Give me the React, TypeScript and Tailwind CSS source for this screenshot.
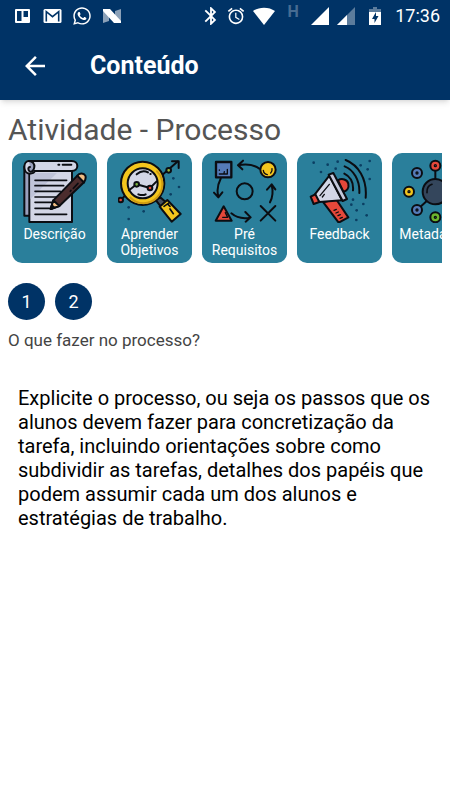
import type { ReactNode } from "react";
import { FaWhatsapp } from "react-icons/fa";
import {
	MdAccessAlarm,
	MdArrowBack,
	MdBluetooth,
	MdSignalCellular4Bar,
} from "react-icons/md";

interface Category {
	key: string;
	label: string;
	icon: ReactNode;
}

type Point = [number, number];

function Dots({ points }: { points: Point[] }) {
	return (
		<g fill="#0b3f63" stroke="none">
			{points.map(([x, y]) => (
				<circle key={`${x}-${y}`} cx={x} cy={y} r="4" />
			))}
		</g>
	);
}

function Artwork({ children }: { children: ReactNode }) {
	return (
		<svg
			viewBox="0 0 192 192"
			className="size-16"
			fill="none"
			stroke="#0b0d12"
			strokeWidth="6"
			strokeLinecap="round"
			strokeLinejoin="round"
			aria-hidden="true"
		>
			{children}
		</svg>
	);
}

function DescriptionArt() {
	return (
		<Artwork>
			<path d="M4 22v148h17V38z" fill="#9aa0bd" />
			<path d="M19 36h128v153H19z" fill="#d3d6e6" />
			<path d="M22 120l80-78H22z" fill="#bfc3d8" stroke="none" />
			<path
				d="M18 6h128c11 0 17 7 17 15s-6 15-17 15H34c2 5-6 8-14 8C10 44 4 35 4 24S10 6 18 6z"
				fill="#d3d6e6"
			/>
			<path d="M18 6c11 0 17 9 16 18s-7 16-13 14-7-14 0-14" fill="#9aa0bd" />
			<path d="M106 17h3M119 17h26" />
			<path
				d="M36 64h95M36 80h86M36 97h76M36 114h64M36 130h54M36 148h44M36 166h95"
				strokeWidth="5"
			/>
			<path d="M83 150l8-26 72-74 20 20-74 71z" fill="#4b2c2d" />
			<path d="M83 150l8-26 18 17z" fill="#f1bd83" />
			<path d="M163 50c6-10 20-8 24 0 3 8 0 14-4 20z" fill="#f1bd83" />
			<path d="M83 150l4-11 7 7z" fill="#0b0d12" />
			<path d="M165 73l-14 15M144 94l-2 3" strokeWidth="5" />
		</Artwork>
	);
}

function GoalsArt() {
	return (
		<Artwork>
			<path d="M8 123l20-20M130 50l48-42" />
			<path d="M162 7h20v20" />
			<path d="M114 124l12-10 16 14-14 14z" fill="#46505e" />
			<path d="M125 143l23-20 40 42-27 23z" fill="#f3c51d" />
			<path d="M138 142l13-9M150 136l6 6M156 150l10 14" strokeWidth="5" />
			<circle cx="74" cy="73" r="65" fill="#f3c51d" />
			<path
				d="M117 37a56 56 0 0 1-80 79"
				stroke="#cf9b12"
				strokeWidth="6"
			/>
			<circle cx="74" cy="73" r="45" fill="#d3d6e6" />
			<path d="M56 46c10-9 23-12 34-6M97 45h1M61 106c8 3 16 3 22 0" />
			<path d="M33 94l23-18 40 11 20-20" />
			<circle cx="56" cy="76" r="7" fill="#7cb342" />
			<circle cx="96" cy="87" r="7" fill="#e5483a" />
			<circle cx="8" cy="123" r="7" fill="#e5483a" />
			<circle cx="152" cy="34" r="7" fill="#9cb83a" />
			<Dots
				points={[
					[166, 58],
					[183, 84],
					[158, 106],
					[32, 145],
					[77, 157],
					[32, 180],
				]}
			/>
		</Artwork>
	);
}

function RequirementsArt() {
	return (
		<Artwork>
			<path d="M9 9h46v46H9z" fill="#557bb8" strokeWidth="7" />
			<path d="M19 34v-1M19 45h24V31M33 43l1-5" strokeWidth="4" />
			<circle cx="165" cy="32" r="23" fill="#f3c51d" />
			<path d="M151 34c1 8 6 12 12 13M173 42c4-4 5-8 4-13" strokeWidth="4" />
			<path d="M139 29c-17-12-40-15-64-10M90 5L75 19l13 12" />
			<circle cx="95" cy="97" r="24" />
			<path d="M23 59c-9 17-12 35-7 54M3 101l13 14 12-15" />
			<path d="M32 142L8 185h48z" fill="#e5483a" />
			<path d="M29 175h15l-7-14" strokeWidth="4" />
			<path d="M55 163c15 13 35 17 57 13M97 159l16 16-15 13" />
			<path d="M171 130c8-15 10-32 5-52M162 92l14-16 11 15" />
			<path d="M143 141l44 44M187 141l-44 44" />
		</Artwork>
	);
}

function FeedbackArt() {
	return (
		<Artwork>
			<path d="M90 64c12-8 28-2 31 10 3 14-5 23-15 24z" fill="#e5483a" />
			<path d="M46 130l38-10 37 55-29 16z" fill="#e5483a" />
			<path d="M84 162l7-3M90 170l7-3M96 178l7-3M78 154l7-3" strokeWidth="4" />
			<path d="M20 107l44-57 38 74-69 5z" fill="#d3d6e6" />
			<path d="M36 110l28-34M49 106l-6 8" strokeWidth="4" />
			<path d="M8 113l14-7 12 23-17 6z" fill="#e5483a" />
			<path d="M62 47l14-5 41 78-13 6z" fill="#c3c7da" />
			<path
				d="M113 3c37 15 65 55 60 113M110 22c27 10 46 43 44 80M109 44c18 9 28 25 26 50"
				strokeWidth="6"
			/>
			<Dots
				points={[
					[17, 11],
					[39, 39],
					[59, 17],
					[89, 8],
					[83, 29],
					[185, 6],
					[158, 19],
					[179, 31],
					[185, 60],
					[135, 122],
					[130, 137],
					[166, 135],
					[146, 154],
					[176, 169],
					[145, 183],
				]}
			/>
		</Artwork>
	);
}

const metadataNodes: { at: Point; fill: string }[] = [
	{ at: [97, 20], fill: "#e5483a" },
	{ at: [42, 42], fill: "#557bb8" },
	{ at: [152, 42], fill: "#557bb8" },
	{ at: [18, 98], fill: "#f3c51d" },
	{ at: [176, 98], fill: "#f3c51d" },
	{ at: [42, 153], fill: "#557bb8" },
	{ at: [152, 153], fill: "#557bb8" },
	{ at: [97, 175], fill: "#6cb52d" },
];

function MetadataArt() {
	return (
		<Artwork>
			<path d="M97 20v45M42 153l30-28M122 125l30 28" />
			<circle cx="97" cy="98" r="38" fill="#34465c" />
			<path d="M72 101c-1-14 6-22 15-25" strokeWidth="5" />
			{metadataNodes.map(({ at: [x, y], fill }) => (
				<g key={`${x}-${y}`}>
					<circle cx={x} cy={y} r="15" fill={fill} />
					<circle cx={x} cy={y} r="2" />
				</g>
			))}
		</Artwork>
	);
}

const categories: Category[] = [
	{ key: "description", label: "Descrição", icon: <DescriptionArt /> },
	{ key: "goals", label: "Aprender Objetivos", icon: <GoalsArt /> },
	{ key: "requirements", label: "Pré Requisitos", icon: <RequirementsArt /> },
	{ key: "feedback", label: "Feedback", icon: <FeedbackArt /> },
	{ key: "metadata", label: "Metadados", icon: <MetadataArt /> },
];

const steps = [1, 2];

function StatusBar() {
	return (
		<div className="flex h-8 items-center justify-between pl-3 pr-2.5">
			<div className="flex items-center gap-2.5">
				<svg viewBox="0 0 20 20" className="size-5" aria-hidden="true">
					<path
						fill="#fff"
						fillRule="evenodd"
						d="M4 3h13a1 1 0 0 1 1 1v12a1 1 0 0 1-1 1H4a1 1 0 0 1-1-1V4a1 1 0 0 1 1-1zM5 5v10h4.500V5zM11.500 5v6H16V5z"
					/>
				</svg>
				<svg viewBox="0 0 20 20" className="size-5" aria-hidden="true">
					<rect x="1.500" y="3" width="18" height="14" rx="1.500" fill="#fff" />
					<path
						d="M4.300 15.500V5.700l6.200 5 6.200-5v9.800"
						fill="none"
						stroke="#003366"
						strokeWidth="1.600"
					/>
				</svg>
				<FaWhatsapp className="size-5" />
				<svg viewBox="0 0 20 20" className="size-5" aria-hidden="true">
					<path d="M1 3l6 1v11l-6 2zM13 5l6-2v14l-6-1z" fill="#8ba1b8" />
					<path d="M1 3h7l11 12v2h-7L1 5z" fill="#fff" />
				</svg>
			</div>
			<div className="flex items-center gap-2">
				<MdBluetooth className="h-5 w-4" viewBox="4 1 16 22" />
				<MdAccessAlarm className="size-[18px]" viewBox="1 1 22 22" />
				<svg viewBox="0 0 22 18" className="h-[18px] w-[22px]" aria-hidden="true">
					<path d="M0 4C6-.500 16-.500 22 4L11 18z" fill="#fff" />
				</svg>
				<span className="w-5 pb-2 text-center text-base leading-4 font-bold text-[#476c92]">
					H
				</span>
				<MdSignalCellular4Bar className="size-[18px]" viewBox="2 2 20 20" />
				<svg viewBox="0 0 18 18" className="size-[18px]" aria-hidden="true">
					<path d="M0 18L18 0v18z" fill="#5c7c9c" />
					<path d="M0 18L10 8v10z" fill="#fff" />
				</svg>
				<svg viewBox="0 0 24 20" className="h-5 w-6" aria-hidden="true">
					<path d="M10 1h4v2h4v3H6V3h4z" fill="#5c7c9c" />
					<path d="M6 6h12v13H6z" fill="#fff" />
					<path d="M13 6l-4 7h2.500v4l4-7H13z" fill="#003366" />
				</svg>
				<span className="text-lg leading-5">17:36</span>
			</div>
		</div>
	);
}

function CategoryCard({ label, icon }: Omit<Category, "key">) {
	return (
		<button
			type="button"
			className="flex h-[110px] w-[85px] shrink-0 flex-col items-center rounded-[10px] bg-[#2a7f9b] pt-1.5 text-sm leading-4 text-white"
		>
			{icon}
			<span className="pt-[3px]">{label}</span>
		</button>
	);
}

export default function App() {
	return (
		<div className="min-h-screen bg-white font-[Roboto,sans-serif]">
			<header className="bg-[#003366] text-white shadow-md">
				<StatusBar />
				<div className="flex h-[68px] items-center gap-10 px-5">
					<button type="button" aria-label="Voltar">
						<MdArrowBack className="size-[30px]" />
					</button>
					<h1 className="text-[25px] leading-8 font-bold">Conteúdo</h1>
				</div>
			</header>

			<main className="px-2 pt-3">
				<h2 className="text-3xl leading-9 text-[#555555]">
					Atividade - Processo
				</h2>
				<nav
					aria-label="Categorias"
					className="mt-[5px] flex gap-2.5 overflow-x-auto px-1 [scrollbar-width:none]"
				>
					{categories.map((category) => (
						<CategoryCard
							key={category.key}
							label={category.label}
							icon={category.icon}
						/>
					))}
				</nav>

				<div className="mt-5 flex gap-2.5">
					{steps.map((step) => (
						<button
							key={step}
							type="button"
							className="size-[37px] rounded-full bg-[#003366] text-lg text-white"
						>
							{step}
						</button>
					))}
				</div>
				<p className="mt-2 text-[17px] leading-6 text-[#444444]">
					O que fazer no processo?
				</p>

				<p className="mt-[34px] px-2.5 text-xl leading-6 text-black">
					Explicite o processo, ou seja os passos que os alunos devem fazer para
					concretização da tarefa, incluindo orientações sobre como subdividir
					as tarefas, detalhes dos papéis que podem assumir cada um dos alunos e
					estratégias de trabalho.
				</p>
			</main>
		</div>
	);
}
